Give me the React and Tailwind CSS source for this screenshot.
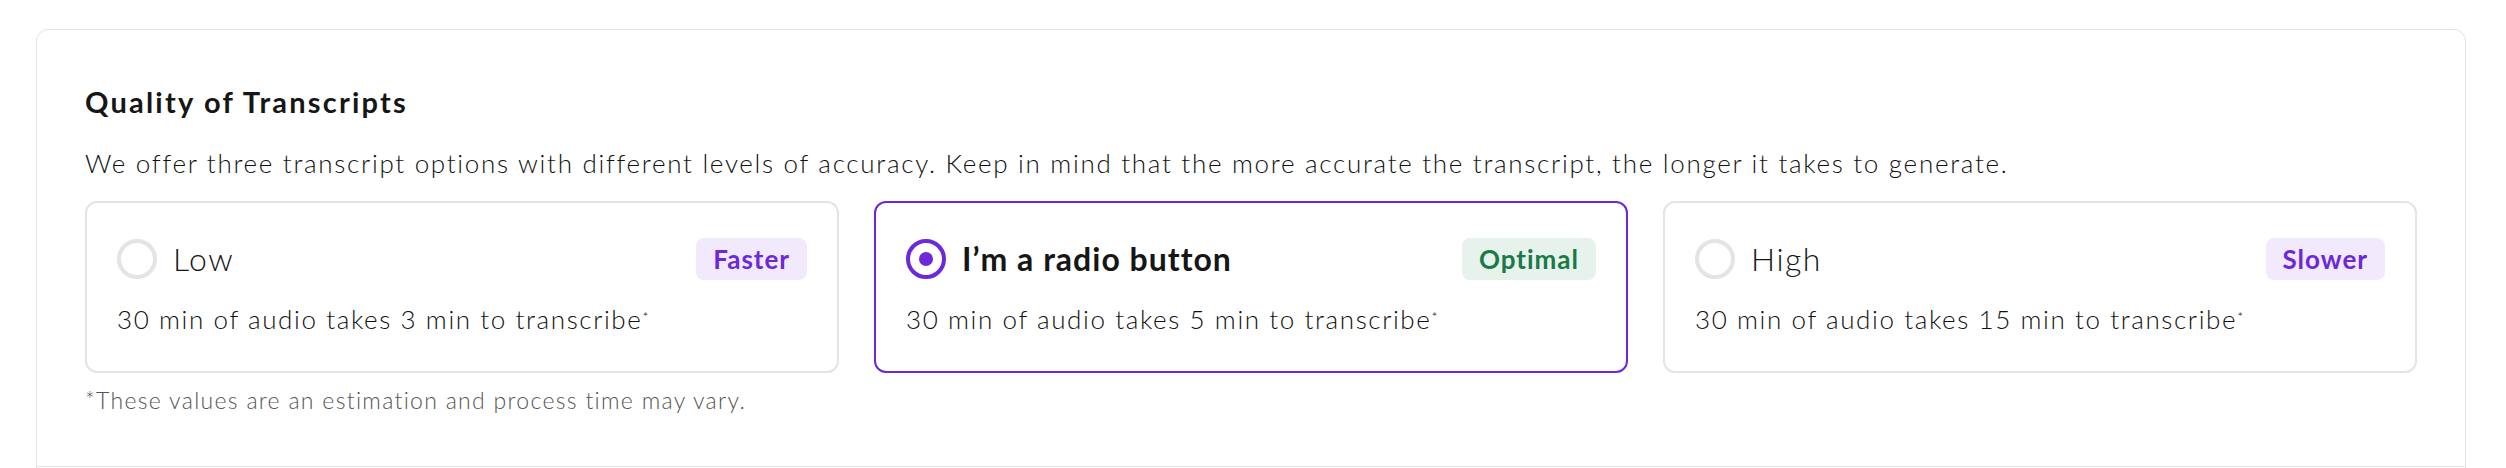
import { useState } from 'react'

const options = [
  { id: 'low', label: 'Low', badge: 'Faster', tone: 'purple', minutes: 3 },
  { id: 'medium', label: 'I’m a radio button', badge: 'Optimal', tone: 'green', minutes: 5 },
  { id: 'high', label: 'High', badge: 'Slower', tone: 'purple', minutes: 15 },
]

function Badge({ tone, children }) {
  const toneClass =
    tone === 'green' ? 'bg-[#e8f2ec] text-[#177a47]' : 'bg-[#f1eafd] text-[#6d28d9]'
  return (
    <span className={`${toneClass} rounded-lg px-[17px] h-[42px] flex items-center text-[26px] tracking-[1px] font-bold leading-none`}>
      {children}
    </span>
  )
}

function RadioCard({ option, checked, onSelect }) {
  return (
    <button
      type="button"
      onClick={() => onSelect(option.id)}
      className={`text-left rounded-xl border-2 px-[30px] pt-[32px] pb-[34px] bg-white ${
        checked ? 'border-[#6d28d9]' : 'border-[#e4e4e7]'
      }`}
    >
      <div className="flex items-center justify-between">
        <div className="flex items-center gap-4">
          <span
            className={`w-10 h-10 rounded-full border-4 flex items-center justify-center ${
              checked ? 'border-[#6d28d9]' : 'border-[#e4e4e7]'
            }`}
          >
            {checked && <span className="w-[14px] h-[14px] rounded-full bg-[#6d28d9]" />}
          </span>
          <span
            className={`text-[32px] text-[#161616] ${
              checked ? 'font-bold tracking-[1px]' : 'font-light tracking-[1.5px]'
            }`}
          >
            {option.label}
          </span>
        </div>
        <Badge tone={option.tone}>{option.badge}</Badge>
      </div>
      <p className="mt-[18px] text-[26px] leading-[36px] tracking-[1.6px] font-light text-[#111]">
        30 min of audio takes {option.minutes} min to transcribe<sup className="text-[14px]">*</sup>
      </p>
    </button>
  )
}

export default function App() {
  const [selected, setSelected] = useState('medium')

  return (
    <div className="bg-white min-h-screen pt-[29px] font-['Lato','Liberation_Sans',sans-serif]">
      <div className="ml-[36px] w-[2430px] border border-[#e4e4e7] rounded-xl">
        <div className="px-12 pt-[54px] pb-[50px]">
          <h2 className="text-[29px] leading-[36px] tracking-[2.2px] font-bold text-[#161616]">
            Quality of Transcripts
          </h2>
          <p className="mt-[25px] text-[26px] leading-[36px] tracking-[1.7px] font-light text-[#111]">
            We offer three transcript options with different levels of accuracy. Keep in mind that the
            more accurate the transcript, the longer it takes to generate.
          </p>
          <div className="mt-[20px] grid grid-cols-3 gap-[35px]">
            {options.map((o) => (
              <RadioCard key={o.id} option={o} checked={selected === o.id} onSelect={setSelected} />
            ))}
          </div>
          <p className="mt-[11px] text-[23px] leading-[32px] tracking-[1.3px] font-light text-[#555]">
            *These values are an estimation and process time may vary.
          </p>
        </div>
        <div className="border-t border-[#e4e4e7] h-[120px]" />
      </div>
    </div>
  )
}
